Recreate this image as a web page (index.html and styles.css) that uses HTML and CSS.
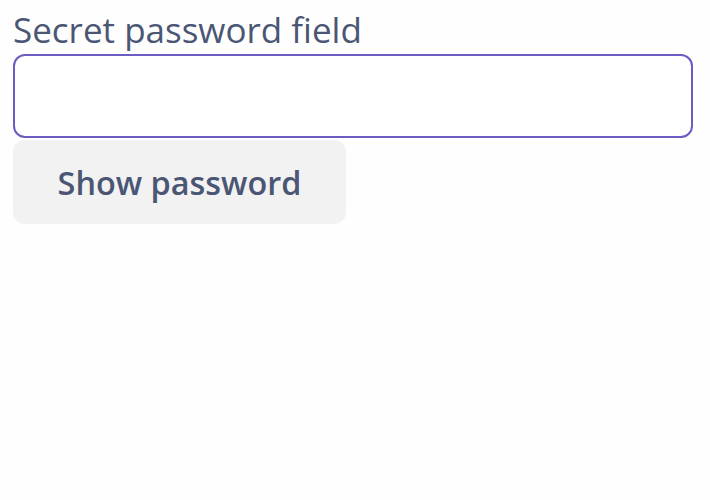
FILE: index.html
```html
<!DOCTYPE html>
<html>
<head>
<meta charset="utf-8">
<link rel="stylesheet" href="styles.css">
</head>
<body>
<div class="form">
  <label class="label" for="pw">Secret password field</label>
  <input class="input" id="pw" type="password">
  <button class="btn" type="button">Show password</button>
</div>
</body>
</html>
```
FILE: styles.css
```css
html, body {
  margin: 0;
  background: #fefefe;
}
.form {
  display: flex;
  flex-direction: column;
  align-items: flex-start;
  gap: 2px;
  padding: 8px 13px;
  width: 680px;
  font-family: "Open Sans", sans-serif;
  color: #4a5674;
}
.label {
  font-size: 35px;
  line-height: 44px;
}
.input {
  box-sizing: border-box;
  width: 680px;
  height: 84px;
  border: 2px solid #6b5cc4;
  border-radius: 12px;
  background: #fff;
  outline: none;
  font-size: 32px;
  padding: 0 16px;
}
.btn {
  box-sizing: border-box;
  height: 84px;
  width: 333px;
  padding: 0;
  border: none;
  border-radius: 12px;
  background: #f2f2f2;
  font-family: "Open Sans", sans-serif;
  font-weight: 600;
  font-size: 32.4px;
  color: #4a5674;
}
```
